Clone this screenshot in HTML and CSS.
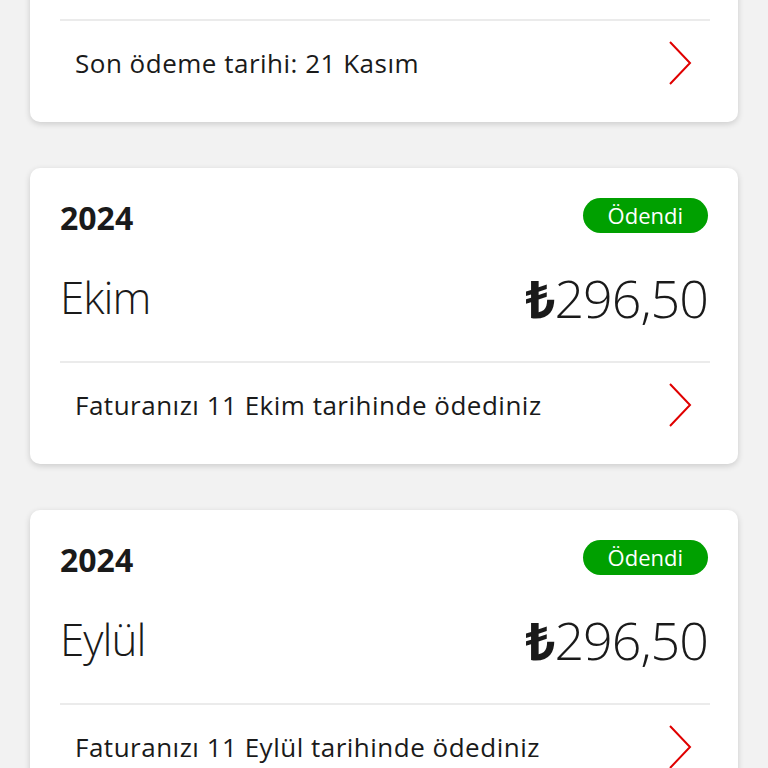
FILE: index.html
```html
<!DOCTYPE html>
<html lang="tr">
<head>
    <meta charset="UTF-8">
    <meta name="viewport" content="width=device-width, initial-scale=1.0">
    <title>Faturalarım</title>
    <link rel="stylesheet" href="styles.css">
</head>
<body>
    <div class="bill-list">
        <div class="bill-card">
            <div class="bill-head">
                <span class="bill-year">2024</span>
                <span class="badge badge-open">Ödenmedi</span>
            </div>
            <div class="bill-main">
                <span class="bill-month">Kasım</span>
                <span class="bill-amount"><span class="lira">₺</span>296,50</span>
            </div>
            <a class="bill-link" href="#">
                <span>Son ödeme tarihi: 21 Kasım</span>
                <svg class="chevron" viewBox="0 0 24 44"><path d="M2 1 L22 22 L2 43" /></svg>
            </a>
        </div>

        <div class="bill-card">
            <div class="bill-head">
                <span class="bill-year">2024</span>
                <span class="badge">Ödendi</span>
            </div>
            <div class="bill-main">
                <span class="bill-month">Ekim</span>
                <span class="bill-amount"><span class="lira">₺</span>296,50</span>
            </div>
            <a class="bill-link" href="#">
                <span>Faturanızı 11 Ekim tarihinde ödediniz</span>
                <svg class="chevron" viewBox="0 0 24 44"><path d="M2 1 L22 22 L2 43" /></svg>
            </a>
        </div>

        <div class="bill-card">
            <div class="bill-head">
                <span class="bill-year">2024</span>
                <span class="badge">Ödendi</span>
            </div>
            <div class="bill-main">
                <span class="bill-month">Eylül</span>
                <span class="bill-amount"><span class="lira">₺</span>296,50</span>
            </div>
            <a class="bill-link" href="#">
                <span>Faturanızı 11 Eylül tarihinde ödediniz</span>
                <svg class="chevron" viewBox="0 0 24 44"><path d="M2 1 L22 22 L2 43" /></svg>
            </a>
        </div>
    </div>
</body>
</html>
```

FILE: styles.css
```css
body {
    font-family: 'Open Sans', 'Noto Sans', sans-serif;
    background-color: #f2f2f2;
    color: #1a1a1a;
    margin: 0;
    padding: 0;
    overflow: hidden;
}

.bill-list {
    display: flex;
    flex-direction: column;
    gap: 46px;
    padding: 0 30px;
    margin-top: -174px;
}

.bill-card {
    background-color: #ffffff;
    border-radius: 10px;
    box-shadow: 0 2px 6px rgba(0, 0, 0, 0.16);
    padding: 30px 28px 11px 30px;
}

.bill-head {
    display: flex;
    justify-content: space-between;
    align-items: center;
    height: 35px;
}

.bill-year {
    font-size: 32px;
    font-weight: 700;
    margin-top: 4px;
}

.badge {
    background-color: #00a000;
    color: #ffffff;
    font-size: 22px;
    line-height: 35px;
    padding: 0 25px;
    border-radius: 18px;
    margin-right: 2px;
}

.badge-open {
    background-color: #e60000;
}

.bill-main {
    display: flex;
    justify-content: space-between;
    align-items: center;
    height: 64px;
    margin-top: 32px;
    padding-bottom: 32px;
    border-bottom: 2px solid #ebebeb;
}

.bill-month {
    font-size: 44px;
    font-weight: 300;
    letter-spacing: -1px;
}

.bill-amount {
    font-size: 52px;
    font-weight: 300;
    letter-spacing: -1px;
    margin-right: 2px;
}

.lira {
    font-weight: 700;
}

.bill-link {
    display: flex;
    justify-content: space-between;
    align-items: center;
    box-sizing: border-box;
    height: 90px;
    padding: 0 18px 6px 15px;
    color: #1a1a1a;
    text-decoration: none;
    font-size: 26px;
    letter-spacing: 0.5px;
}

.chevron {
    width: 24px;
    height: 44px;
    fill: none;
    stroke: #e00000;
    stroke-width: 2;
}
```
